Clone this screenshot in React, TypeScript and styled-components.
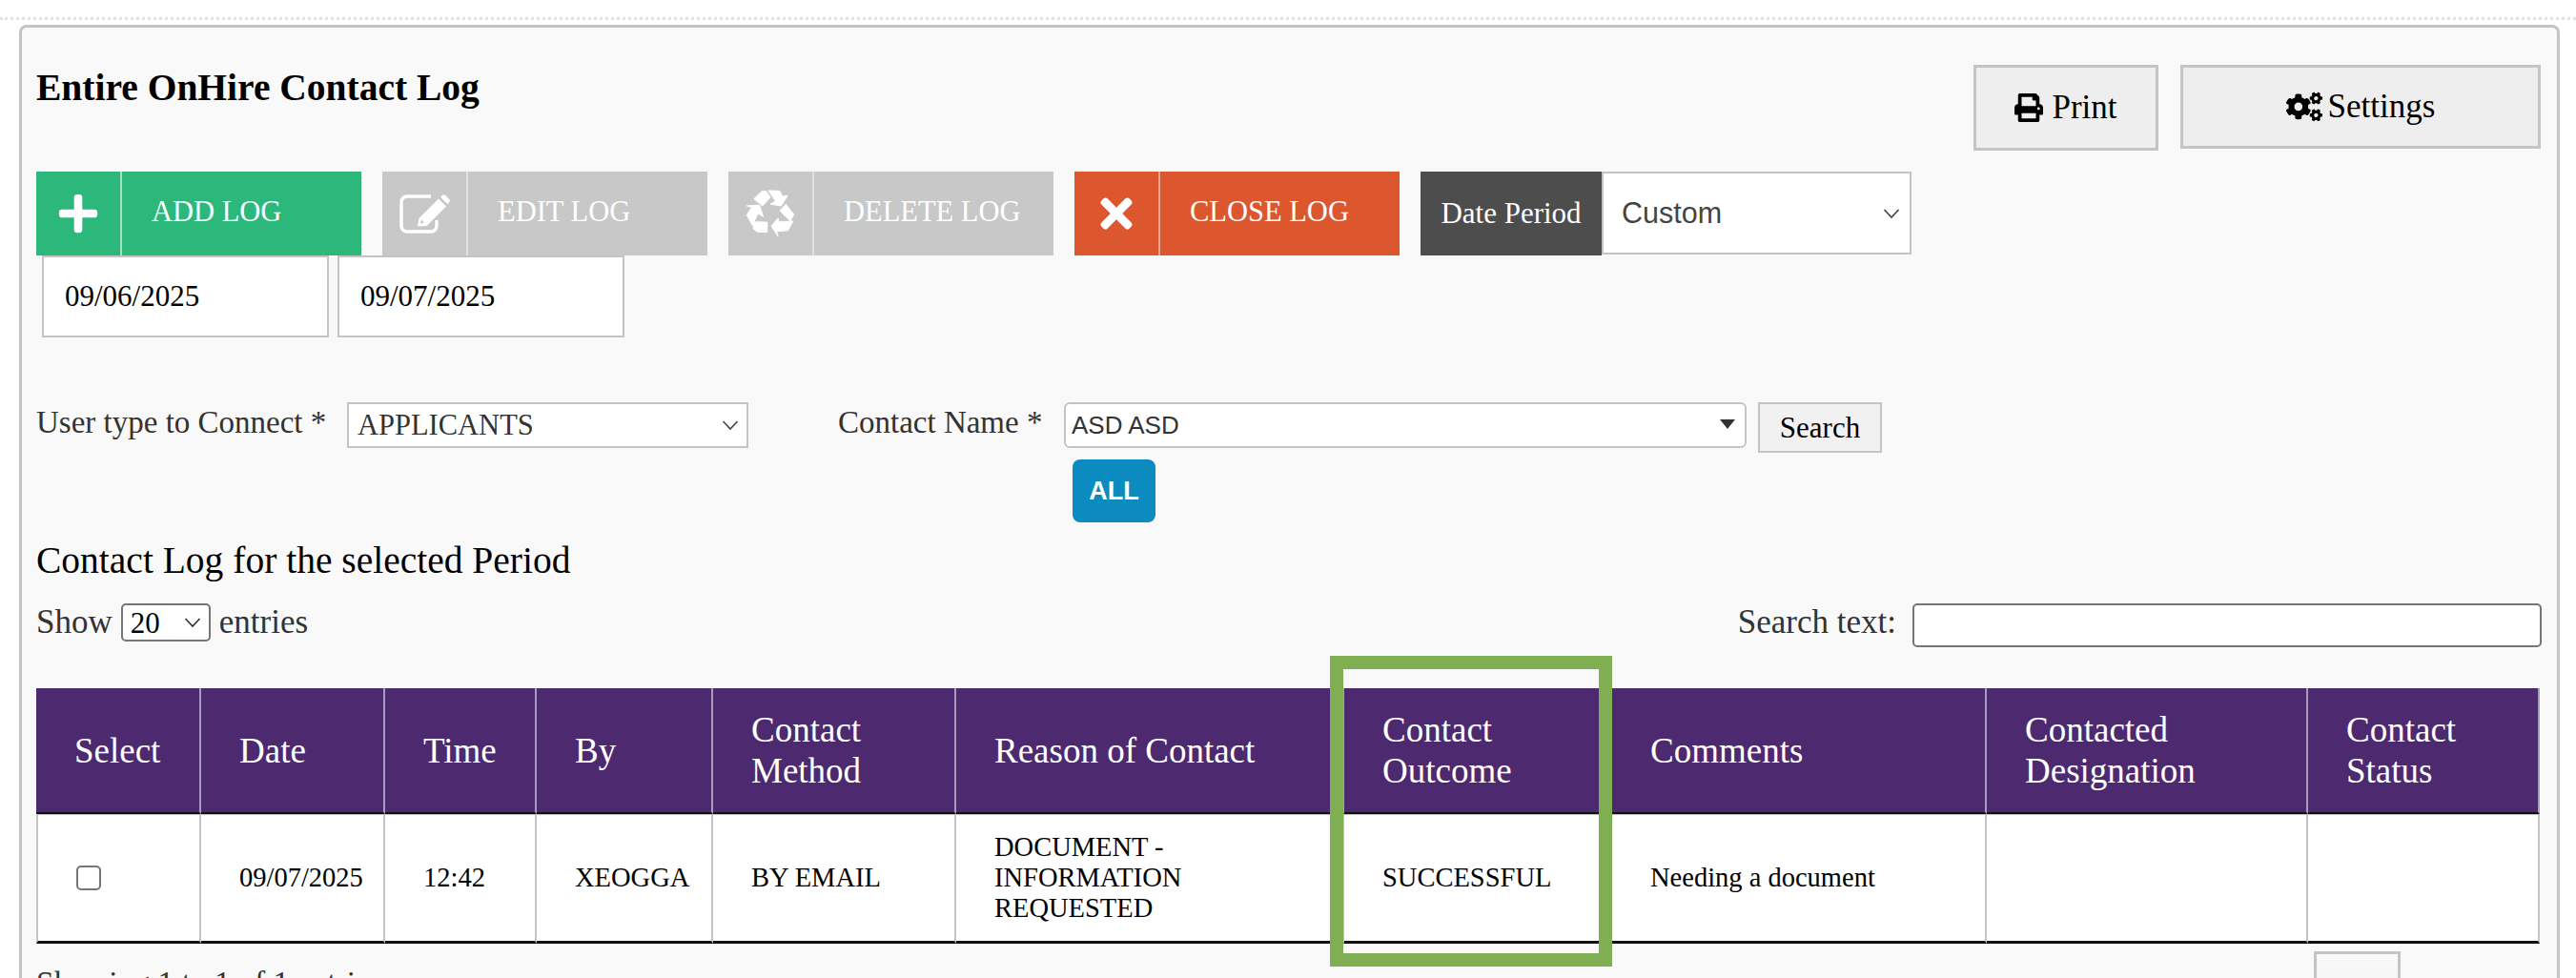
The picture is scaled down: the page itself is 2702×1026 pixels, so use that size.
import React from "react";
import styled, { createGlobalStyle } from "styled-components";
import { FaPlus, FaTimes, FaPrint, FaCogs } from "react-icons/fa";

const chevron = (color: string) =>
  `url("data:image/svg+xml,%3Csvg xmlns='http://www.w3.org/2000/svg' width='18' height='12' viewBox='0 0 18 12'%3E%3Cpath d='M1.5 2 L9 10 L16.5 2' fill='none' stroke='%23${color}' stroke-width='1.6'/%3E%3C/svg%3E")`;

const GlobalStyle = createGlobalStyle`
  html, body {
    margin: 0;
    height: 100%;
    overflow: hidden;
    background: #ffffff;
    font-family: "Liberation Serif", "Times New Roman", serif;
    color: #000000;
  }
`;

const Page = styled.div`
  padding-top: 18px;
`;

const TopRule = styled.div`
  height: 0;
  border-top: 3px dotted #e2e2e2;
  margin-bottom: 5px;
`;

const Panel = styled.div`
  width: 2665px;
  box-sizing: border-box;
  margin-left: 20px;
  padding: 39px 16px 60px 15px;
  background: #f9f9f9;
  border: 3px solid #c4c4c4;
  border-bottom: none;
  border-radius: 8px 8px 0 0;
`;

const HeaderRow = styled.div`
  display: flex;
  align-items: flex-start;
  height: 90px;
  margin: 0 1px 22px 0;
`;

const Title = styled.h1`
  flex: 1;
  margin: 2px 0 0;
  font-size: 39.5px;
  line-height: 44px;
  font-weight: bold;
`;

const TopButton = styled.button<{ $w: number; $h: number; $gap: number }>`
  display: flex;
  align-items: center;
  justify-content: center;
  gap: ${(p) => p.$gap}px;
  width: ${(p) => p.$w}px;
  height: ${(p) => p.$h}px;
  margin-left: 23px;
  padding: 0;
  background: #eeeeee;
  border: 3px solid #c4c4c4;
  font-family: inherit;
  font-size: 35px;
  color: #000000;
`;

const Toolbar = styled.div`
  display: flex;
  height: 88px;
`;

const LogButton = styled.button<{ $bg: string }>`
  display: flex;
  align-items: stretch;
  width: 341px;
  height: 88px;
  margin-right: 22px;
  padding: 0;
  border: none;
  background: ${(p) => p.$bg};
  color: #ffffff;
  font-family: inherit;
  font-size: 30.5px;
`;

const LogIcon = styled.span<{ $line: string }>`
  display: flex;
  align-items: center;
  justify-content: center;
  width: 88px;
  border-right: 2px solid ${(p) => p.$line};
`;

const LogLabel = styled.span`
  display: flex;
  align-items: center;
  padding-left: 31px;
  padding-bottom: 4px;
`;

const PeriodLabel = styled.div`
  display: flex;
  align-items: center;
  justify-content: center;
  width: 190px;
  height: 88px;
  background: #4d4d4d;
  color: #ffffff;
  font-size: 31px;
`;

const PeriodSelect = styled.select`
  appearance: none;
  width: 325px;
  height: 87px;
  box-sizing: border-box;
  padding: 0 0 2px 19px;
  background: #ffffff ${chevron("444444")} no-repeat right 10px center;
  border: 2px solid #c4c4c4;
  border-radius: 0;
  font-family: "Liberation Sans", Arial, sans-serif;
  font-size: 30.5px;
  color: #444444;
`;

const DateRow = styled.div`
  display: flex;
  gap: 9px;
  margin-left: 6px;
`;

const DateInput = styled.input`
  width: 301px;
  height: 86px;
  box-sizing: border-box;
  padding: 0 0 0 22px;
  background: #ffffff;
  border: 2px solid #c4c4c4;
  border-radius: 0;
  font-family: inherit;
  font-size: 31px;
  color: #000000;
`;

const FilterRow = styled.div`
  display: flex;
  align-items: flex-start;
  margin-top: 68px;
`;

const FieldLabel = styled.label<{ $w: number }>`
  width: ${(p) => p.$w}px;
  flex: none;
  font-size: 33px;
  line-height: 42px;
  color: #333333;
`;

const UserSelect = styled.select`
  appearance: none;
  width: 421px;
  height: 48px;
  box-sizing: border-box;
  padding: 0 0 0 9px;
  margin-right: 94px;
  background: #ffffff ${chevron("444444")} no-repeat right 8px center;
  border: 2px solid #c4c4c4;
  border-radius: 0;
  font-family: inherit;
  font-size: 30.5px;
  color: #333333;
`;

const NameSelect = styled.div`
  position: relative;
  display: flex;
  align-items: center;
  width: 716px;
  height: 48px;
  box-sizing: border-box;
  padding-left: 6px;
  background: #ffffff;
  border: 2px solid #c4c4c4;
  border-radius: 6px;
  font-family: "Liberation Sans", Arial, sans-serif;
  font-size: 26px;
  color: #333333;
`;

const NameCaret = styled.span`
  position: absolute;
  right: 10px;
  top: 16px;
  border-left: 8px solid transparent;
  border-right: 8px solid transparent;
  border-top: 10px solid #333333;
`;

const SearchButton = styled.button`
  width: 130px;
  height: 53px;
  margin-left: 12px;
  padding: 0;
  background: #f1f1f1;
  border: 2px solid #c4c4c4;
  font-family: inherit;
  font-size: 31px;
  color: #000000;
`;

const AllButton = styled.button`
  display: block;
  width: 87px;
  height: 66px;
  margin: 7px 0 0 1087px;
  padding: 0;
  border: none;
  border-radius: 8px;
  background: #0b8bc0;
  color: #ffffff;
  font-family: "Liberation Sans", Arial, sans-serif;
  font-size: 27px;
  font-weight: bold;
`;

const SectionTitle = styled.h2`
  margin: 19px 0 0;
  font-size: 39.5px;
  line-height: 42px;
  font-weight: normal;
`;

const ControlsRow = styled.div`
  display: flex;
  align-items: flex-start;
  justify-content: space-between;
  margin-top: 24px;
  height: 46px;
  font-size: 35px;
  line-height: 40px;
  color: #333333;
`;

const ShowEntries = styled.div`
  display: flex;
  align-items: center;
  gap: 9px;
`;

const EntriesSelect = styled.select`
  appearance: none;
  width: 94px;
  height: 40px;
  box-sizing: border-box;
  padding: 0 0 0 8px;
  background: #ffffff ${chevron("333333")} no-repeat right 8px center;
  border: 2px solid #767676;
  border-radius: 5px;
  font-family: inherit;
  font-size: 31px;
  color: #000000;
`;

const SearchBox = styled.div`
  display: flex;
  align-items: flex-start;
  gap: 17px;
`;

const SearchInput = styled.input`
  width: 660px;
  height: 46px;
  box-sizing: border-box;
  background: #ffffff;
  border: 2px solid #767676;
  border-radius: 5px;
`;

const TableWrap = styled.div`
  position: relative;
  margin-top: 43px;
  width: 2626px;
`;

const Table = styled.table`
  width: 100%;
  table-layout: fixed;
  border-collapse: separate;
  border-spacing: 0;
`;

const Th = styled.th`
  height: 130px;
  padding: 0 20px 0 40px;
  background: #4d2a70;
  border-right: 2px solid #a99bbb;
  border-bottom: 2px solid #111111;
  color: #ffffff;
  font-size: 37px;
  line-height: 43px;
  font-weight: normal;
  text-align: left;
`;

const Td = styled.td`
  height: 133px;
  padding: 0 14px 0 40px;
  background: #ffffff;
  border-right: 2px solid #c4c4c4;
  border-bottom: 3px solid #111111;
  box-shadow: inset 0 1px 0 #bbbbbb;
  font-size: 28.5px;
  line-height: 32px;

  &:first-child {
    border-left: 2px solid #c4c4c4;
  }
`;

const CheckBox = styled.input`
  appearance: none;
  display: block;
  width: 26px;
  height: 26px;
  margin: 0;
  background: #ffffff;
  border: 2px solid #767676;
  border-radius: 5px;
`;

const Highlight = styled.div`
  position: absolute;
  left: 1357px;
  top: -34px;
  width: 296px;
  height: 326px;
  box-sizing: border-box;
  border: 14px solid #80ae52;
  pointer-events: none;
`;

const TableFooter = styled.div`
  display: flex;
  justify-content: space-between;
  align-items: flex-start;
  margin-top: 8px;
  padding-right: 146px;
  font-size: 33.5px;
  line-height: 36px;
  color: #333333;
`;

const FooterInfo = styled.div`
  margin-top: 15px;
`;

const PagerButton = styled.div`
  width: 91px;
  height: 60px;
  box-sizing: border-box;
  background: linear-gradient(#fafafa, #f1f1f1);
  border: 3px solid #c4c4c4;
`;

// pencil-in-a-square, drawn because the package's edit icon has a thinner pencil
const EditIcon = () => (
  <svg width="53" height="41" viewBox="0 0 53 41" fill="none">
    <path
      d="M33 2 H8 A6 6 0 0 0 2 8 V33 A6 6 0 0 0 8 39 H33 A6 6 0 0 0 39 33 V27"
      stroke="currentColor"
      strokeWidth="3.4"
    />
    <path
      fillRule="evenodd"
      fill="currentColor"
      d="M19 33.5 L20.5 25 L41 4.5 L49 12.5 L28.5 33 Z M22.5 27 L22 30.5 L25.5 30 L24.5 27.5 Z"
    />
    <path
      fill="currentColor"
      d="M43 2.8 L45 0.8 Q46.5 -0.3 48 0.8 L52.4 5.2 Q53.4 6.6 52.4 8 L50.6 10.2 Z"
    />
  </svg>
);

// three bands and three arrows of the recycling sign
const RecycleIcon = () => (
  <svg width="52" height="50" viewBox="-2 -2 158 154" fill="currentColor" stroke="currentColor" strokeWidth="3" strokeLinejoin="round">
    <path d="M50 3 L24 28 L52 50 L77 23 L64 3 Z" />
    <path d="M71 1 L107 2 L117 20 L133 17 L112 50 L77 45 L94 35 Z" />
    <path d="M127 45 L153 78 L142 100 L108 66 Z" />
    <path d="M150 100 L134 130 L97 133 L102 149 L80 115 L102 90 L104 102 Z" />
    <path d="M22 102 L67 103 L67 135 L37 135 L22 125 Z" />
    <path d="M1 50 L42 48 L54 85 L37 75 L19 113 L1 80 L17 55 Z" />
  </svg>
);

const columns = [173, 193, 159, 185, 255, 407, 281, 393, 337, 243];

const headers = [
  "Select",
  "Date",
  "Time",
  "By",
  "Contact Method",
  "Reason of Contact",
  "Contact Outcome",
  "Comments",
  "Contacted Designation",
  "Contact Status",
];

export default function App() {
  return (
    <Page>
      <GlobalStyle />
      <TopRule />
      <Panel>
        <HeaderRow>
          <Title>Entire OnHire Contact Log</Title>
          <TopButton $w={194} $h={90} $gap={9}>
            <FaPrint size={30} />
            Print
          </TopButton>
          <TopButton $w={378} $h={88} $gap={6}>
            <FaCogs size={38} />
            Settings
          </TopButton>
        </HeaderRow>

        <Toolbar>
          <LogButton $bg="#2cb87a">
            <LogIcon $line="#a9dcc3">
              <FaPlus size={46} />
            </LogIcon>
            <LogLabel>ADD LOG</LogLabel>
          </LogButton>
          <LogButton $bg="#c8c8c8">
            <LogIcon $line="#e2e2e2">
              <EditIcon />
            </LogIcon>
            <LogLabel>EDIT LOG</LogLabel>
          </LogButton>
          <LogButton $bg="#c8c8c8">
            <LogIcon $line="#e2e2e2">
              <RecycleIcon />
            </LogIcon>
            <LogLabel>DELETE LOG</LogLabel>
          </LogButton>
          <LogButton $bg="#dc562e">
            <LogIcon $line="#eca68f">
              <FaTimes size={48} />
            </LogIcon>
            <LogLabel>CLOSE LOG</LogLabel>
          </LogButton>
          <PeriodLabel>Date Period</PeriodLabel>
          <PeriodSelect defaultValue="Custom">
            <option>Custom</option>
          </PeriodSelect>
        </Toolbar>

        <DateRow>
          <DateInput defaultValue="09/06/2025" />
          <DateInput defaultValue="09/07/2025" />
        </DateRow>

        <FilterRow>
          <FieldLabel $w={326}>User type to Connect *</FieldLabel>
          <UserSelect defaultValue="APPLICANTS">
            <option>APPLICANTS</option>
          </UserSelect>
          <FieldLabel $w={237}>Contact Name *</FieldLabel>
          <NameSelect>
            ASD ASD
            <NameCaret />
          </NameSelect>
          <SearchButton>Search</SearchButton>
        </FilterRow>
        <AllButton>ALL</AllButton>

        <SectionTitle>Contact Log for the selected Period</SectionTitle>
        <ControlsRow>
          <ShowEntries>
            Show
            <EntriesSelect defaultValue="20">
              <option>20</option>
            </EntriesSelect>
            entries
          </ShowEntries>
          <SearchBox>
            Search text:
            <SearchInput />
          </SearchBox>
        </ControlsRow>

        <TableWrap>
          <Table>
            <colgroup>
              {columns.map((w, i) => (
                <col key={i} style={{ width: w }} />
              ))}
            </colgroup>
            <thead>
              <tr>
                {headers.map((h) => (
                  <Th key={h}>{h}</Th>
                ))}
              </tr>
            </thead>
            <tbody>
              <tr>
                <Td>
                  <CheckBox type="checkbox" />
                </Td>
                <Td>09/07/2025</Td>
                <Td>12:42</Td>
                <Td>XEOGGA</Td>
                <Td>BY EMAIL</Td>
                <Td>
                  DOCUMENT -<br />
                  INFORMATION
                  <br />
                  REQUESTED
                </Td>
                <Td>SUCCESSFUL</Td>
                <Td>Needing a document</Td>
                <Td />
                <Td />
              </tr>
            </tbody>
          </Table>
          <Highlight />
          <TableFooter>
            <FooterInfo>Showing 1 to 1 of 1 entries</FooterInfo>
            <PagerButton />
          </TableFooter>
        </TableWrap>
      </Panel>
    </Page>
  );
}
